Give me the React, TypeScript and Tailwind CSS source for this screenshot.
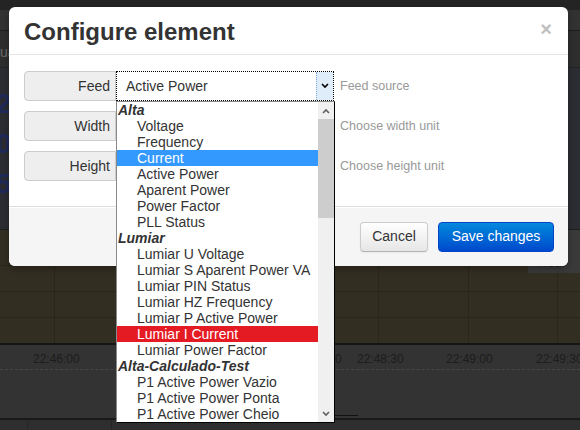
import React from "react";

type Item = { label: string; group?: boolean; hl?: "blue" | "red" };

const items: Item[] = [
  { label: "Alta", group: true },
  { label: "Voltage" },
  { label: "Frequency" },
  { label: "Current", hl: "blue" },
  { label: "Active Power" },
  { label: "Aparent Power" },
  { label: "Power Factor" },
  { label: "PLL Status" },
  { label: "Lumiar", group: true },
  { label: "Lumiar U Voltage" },
  { label: "Lumiar S Aparent Power VA" },
  { label: "Lumiar PIN Status" },
  { label: "Lumiar HZ Frequency" },
  { label: "Lumiar P Active Power" },
  { label: "Lumiar I Current", hl: "red" },
  { label: "Lumiar Power Factor" },
  { label: "Alta-Calculado-Test", group: true },
  { label: "P1 Active Power Vazio" },
  { label: "P1 Active Power Ponta" },
  { label: "P1 Active Power Cheio" },
];

const axisLabels = [
  { t: "22:46:00", x: 33 },
  { t: "22:48:00", x: 295 },
  { t: "22:48:30", x: 357 },
  { t: "22:49:00", x: 446 },
  { t: "22:49:30", x: 536 },
];

function Chevron({ up = false, className = "" }: { up?: boolean; className?: string }) {
  return (
    <svg width="8" height="6" viewBox="0 0 8 6" className={className}>
      <path
        d={up ? "M1 5 L4 2 L7 5" : "M1 1 L4 4 L7 1"}
        fill="none"
        stroke="currentColor"
        strokeWidth="1.6"
      />
    </svg>
  );
}

function Row({ label, help, children }: { label: string; help: string; children?: React.ReactNode }) {
  return (
    <div className="flex h-[30px] items-center">
      <div className="flex h-full w-[92px] items-center justify-end rounded-l-[4px] border border-[#ccc] bg-[#eee] pr-[5px] text-[14px] text-[#333]">
        {label}
      </div>
      <div className="relative h-full w-[218px]">{children}</div>
      <div className="ml-[6px] pt-[1px] text-[12.5px] text-[#999]">{help}</div>
    </div>
  );
}

export default function App() {
  return (
    <div className="relative h-[430px] w-[580px] overflow-hidden bg-[#2b2b2b] font-['Liberation_Sans',Arial,sans-serif]">
      {/* background page */}
      <div className="h-[10px] bg-[#242424]" />
      <div className="h-[21px] border-b border-[#1e1e1e] bg-[#323232]" />
      <div className="flex h-[37px] items-center border-b border-[#232323] bg-[#2e2e2e] text-[14px] text-[#6a6a6a]">
        <span className="-ml-[11px] pt-[6px]">Qua</span>
      </div>
      <div className="flex h-[162px] flex-col border-b border-[#1f1f1f] bg-[#2c2d32] pt-[16px] text-[28px] font-bold leading-[40px] text-[#1f2a5a]">
        <span className="-ml-[4px]">23</span>
        <span className="-ml-[4px]">0.</span>
        <span className="-ml-[4px]">5</span>
      </div>
      <div className="relative h-[113px] bg-[#332e22]">
        <svg width="580" height="113" className="block">
          {[54, 144, 234, 288, 378, 468, 557].map((x) => (
            <line key={x} x1={x + 0.5} y1="0" x2={x + 0.5} y2="113" stroke="#2a261c" strokeWidth="1" />
          ))}
          {[35, 61, 87].map((y) => (
            <line key={y} x1="0" y1={y + 0.5} x2="580" y2={y + 0.5} stroke="#2a261c" strokeWidth="1" />
          ))}
        </svg>
        <div className="absolute right-0 top-0 flex h-[43px] w-[52px] items-end justify-end bg-[#3a3a3a] pb-[1px] pr-[14px] text-[13px] text-[#222]">
          Hour
        </div>
      </div>
      <div className="h-[2px] bg-[#151515]" />
      <div className="relative h-[73px] bg-[#333]">
        {axisLabels.map((a) => (
          <span key={a.t} className="absolute top-[5px] text-[12px] text-[#1c1c1c]" style={{ left: a.x }}>
            {a.t}
          </span>
        ))}
        <div className="absolute left-0 right-0 top-[24px] border-t border-dashed border-[#474747]" />
        <div className="absolute left-[300px] top-[70px] h-[1px] w-[58px] bg-[#111]" />
      </div>
      <div className="h-[2px] bg-[#1a1a1a]" />
      <div className="flex h-[10px] bg-[#2e2e2e]">
        <div className="w-[28px] border-r border-[#262626]" />
        <div className="w-[84px] border-r border-[#262626]" />
      </div>

      {/* modal */}
      <div className="absolute left-[9px] top-[7px] flex h-[259px] w-[559px] flex-col rounded-[6px] bg-white shadow-[0_3px_7px_rgba(0,0,0,0.3)]">
        <div className="flex h-[48px] items-center justify-between border-b border-[#e5e5e5] pl-[15px] pr-[16px]">
          <h3 className="pt-[2px] text-[24px] font-bold leading-none text-[#333]">Configure element</h3>
          <span className="-mt-[3px] text-[20px] font-bold leading-none text-[#c0c0c0]">×</span>
        </div>
        <div className="flex h-[151px] flex-col gap-[10px] px-[15px] pt-[16px]">
          <Row label="Feed" help="Feed source">
            <div className="flex h-full w-full items-center border border-dotted border-black bg-white">
              <span className="flex-1 pl-[9px] text-[14px] text-[#333]">Active Power</span>
              <div className="flex h-full w-[17px] items-center justify-center border-l border-dotted border-[#7ea8d6] bg-[#dfecfa] text-black">
                <Chevron />
              </div>
            </div>
          </Row>
          <Row label="Width" help="Choose width unit">
            <div className="h-full w-full border border-[#ccc] bg-white" />
          </Row>
          <Row label="Height" help="Choose height unit">
            <div className="h-full w-full border border-[#ccc] bg-white" />
          </Row>
        </div>
        <div className="flex flex-1 items-center justify-end gap-[10px] rounded-b-[6px] border-t border-[#ddd] bg-[#f5f5f5] pr-[14px] shadow-[inset_0_1px_0_#fff]">
          <button className="h-[30px] w-[68px] rounded-[4px] border border-[#ccc] border-b-[#b3b3b3] bg-gradient-to-b from-white to-[#e6e6e6] text-[14px] text-[#333] shadow-[inset_0_1px_0_rgba(255,255,255,0.2),0_1px_2px_rgba(0,0,0,0.05)]">
            Cancel
          </button>
          <button className="h-[30px] w-[116px] rounded-[4px] border border-[#0044cc] bg-gradient-to-b from-[#0a88dc] to-[#0048cc] text-[14px] text-white">
            Save changes
          </button>
        </div>
      </div>

      {/* open dropdown list */}
      <div className="absolute left-[116px] top-[101px] flex h-[322px] w-[219px] border-b border-l border-r border-t border-b-black border-l-[#8a8a8a] border-r-black border-t-[#8a8a8a] bg-white">
        <div className="w-[201px] overflow-hidden">
          {items.map((it) => (
            <div
              key={it.label}
              className={
                "h-[16px] whitespace-nowrap text-[14px] leading-[16px] " +
                (it.group ? "pl-[1px] font-bold italic text-[#222] " : "pl-[20px] ") +
                (it.hl === "blue"
                  ? "bg-[#3399ff] text-white"
                  : it.hl === "red"
                  ? "bg-[#e51b24] text-white"
                  : "text-[#333]")
              }
            >
              {it.label}
            </div>
          ))}
        </div>
        <div className="flex w-[16px] flex-col bg-[#f0f0f0]">
          <div className="flex h-[17px] items-center justify-center text-[#606060]">
            <Chevron up />
          </div>
          <div className="h-[99px] bg-[#cdcdcd]" />
          <div className="flex-1" />
          <div className="flex h-[17px] items-center justify-center text-[#606060]">
            <Chevron />
          </div>
        </div>
      </div>
    </div>
  );
}
